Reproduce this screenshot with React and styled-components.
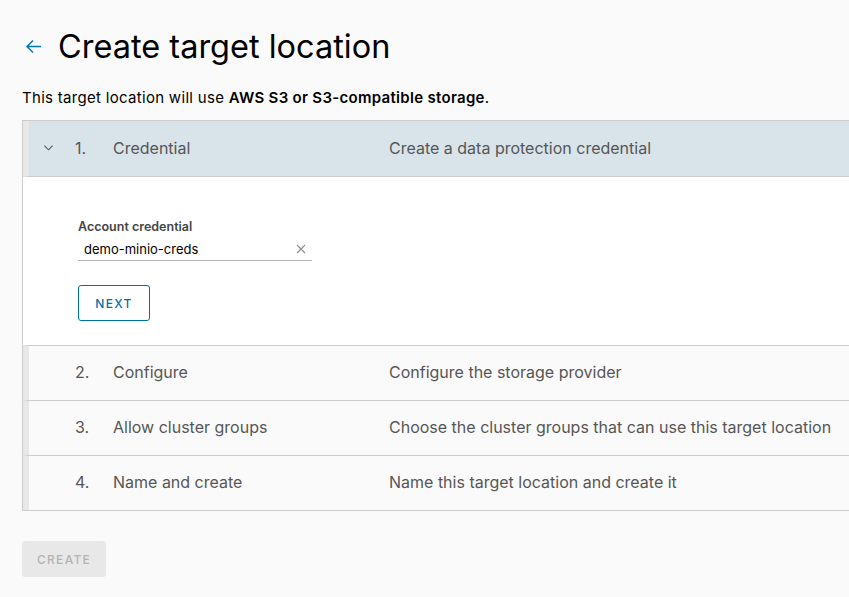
import React from 'react';
import styled, { createGlobalStyle } from 'styled-components';

const GlobalStyle = createGlobalStyle`
  html, body {
    margin: 0;
    background: #fafafa;
    font-family: Inter, "Open Sans", sans-serif;
    color: #565656;
  }
`;

const Page = styled.div`
  padding: 27px 0 0 22px;
  overflow: hidden;
`;

const TitleRow = styled.div`
  display: flex;
  align-items: center;
  gap: 16px;
  height: 38px;
`;

const BackButton = styled.button`
  border: none;
  background: none;
  padding: 0;
  margin-left: 3px;
  display: flex;
  color: #0079b8;
  cursor: pointer;
`;

const Title = styled.h1`
  margin: 0;
  font-weight: 400;
  font-size: 32.5px;
  color: #000;
`;

const Intro = styled.p`
  margin: 23px 0 13px;
  font-size: 15px;
  letter-spacing: 0.3px;
  color: #000;
  b { font-weight: 600; }
`;

const Stepper = styled.div`
  border: 1px solid #ccc;
  border-right: none;
  margin-right: -2px;
`;

const StepHeader = styled.div`
  display: grid;
  grid-template-columns: 46px 38px 276px 1fr;
  align-items: center;
  box-sizing: border-box;
  height: ${p => (p.first ? '56px' : '55px')};
  padding-bottom: 2px;
  background: ${p => (p.active ? '#d9e4ea' : '#fafafa')};
  border-left: 6px solid #e8e8e8;
  border-top: ${p => (p.first ? 'none' : '1px solid #ccc')};
  border-bottom: ${p => (p.active ? '1px solid #ccc' : 'none')};
  font-size: 16px;
  color: #565656;
  white-space: nowrap;
`;

const Chevron = styled.span`
  display: flex;
  padding-left: 14px;
  color: #565656;
`;

const StepPanel = styled.div`
  background: #fff;
  padding: 42px 0 24px 55px;
`;

const Label = styled.div`
  font-size: 12.5px;
  font-weight: 600;
  color: #454545;
  margin-bottom: 3px;
`;

const InputWrap = styled.div`
  width: 234px;
  height: 24px;
  display: flex;
  align-items: center;
  justify-content: space-between;
  border-bottom: 1px solid #b3b3b3;
  padding: 0 6px;
  box-sizing: border-box;
  font-size: 13px;
  color: #000;
`;

const ClearIcon = styled.span`
  display: flex;
  color: #8c8c8c;
`;

const OutlineButton = styled.button`
  margin-top: 24px;
  height: 36px;
  width: 72px;
  border: 1px solid #0072a3;
  border-radius: 3px;
  background: #fff;
  color: #0072a3;
  font-family: inherit;
  font-size: 12px;
  font-weight: 500;
  letter-spacing: 1.3px;
`;

const DisabledButton = styled.button`
  margin-top: 30px;
  height: 36px;
  width: 84px;
  border: none;
  border-radius: 3px;
  background: #e8e8e8;
  color: #b3b3b3;
  font-family: inherit;
  font-size: 12px;
  font-weight: 500;
  letter-spacing: 1.3px;
`;

const steps = [
  ['2.', 'Configure', 'Configure the storage provider'],
  ['3.', 'Allow cluster groups', 'Choose the cluster groups that can use this target location'],
  ['4.', 'Name and create', 'Name this target location and create it'],
];

export default function App() {
  return (
    <Page>
      <GlobalStyle />
      <TitleRow>
        <BackButton>
          <svg width="17" height="17" viewBox="0 0 17 17" fill="none" stroke="currentColor" strokeWidth="1.5">
            <path d="M16 8.5H2M8 2.5L2 8.5l6 6" />
          </svg>
        </BackButton>
        <Title>Create target location</Title>
      </TitleRow>
      <Intro>
        This target location will use <b>AWS S3 or S3-compatible storage</b>.
      </Intro>
      <Stepper>
        <StepHeader active first>
          <Chevron>
            <svg width="11" height="11" viewBox="0 0 12 12" fill="none" stroke="currentColor" strokeWidth="1.2">
              <path d="M1.5 4l4.5 4.5 4.5-4.5" />
            </svg>
          </Chevron>
          <span>1.</span>
          <span>Credential</span>
          <span>Create a data protection credential</span>
        </StepHeader>
        <StepPanel>
          <Label>Account credential</Label>
          <InputWrap>
            <span>demo-minio-creds</span>
            <ClearIcon>
              <svg width="10" height="10" viewBox="0 0 10 10" stroke="currentColor" strokeWidth="1.1">
                <path d="M1 1l8 8M9 1l-8 8" />
              </svg>
            </ClearIcon>
          </InputWrap>
          <OutlineButton>NEXT</OutlineButton>
        </StepPanel>
        {steps.map(([n, name, desc]) => (
          <StepHeader key={n}>
            <span />
            <span>{n}</span>
            <span>{name}</span>
            <span>{desc}</span>
          </StepHeader>
        ))}
      </Stepper>
      <DisabledButton>CREATE</DisabledButton>
    </Page>
  );
}
